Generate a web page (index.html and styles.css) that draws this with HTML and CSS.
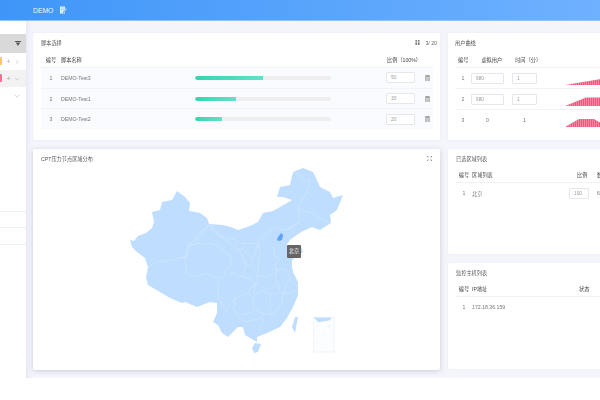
FILE: index.html
```html
<!DOCTYPE html>
<html lang="zh">
<head>
<meta charset="utf-8">
<title>DEMO</title>
<link rel="stylesheet" href="styles.css">
</head>
<body>
<div class="app">
  <header class="topbar">
    <span class="brand">DEMO</span>
    <svg class="edit" viewBox="0 0 8 8"><path d="M1 .5h5v2.400L4 5.600 3.800 7 5.200 6.700 6 6v1.500H1z" fill="#e4f0ff"/><path d="M2 2h3M2 3.500h2.500M2 5h1.200" stroke="#6aa9f5" stroke-width=".5"/><path d="M4.500 6 7.500 2.600" stroke="#e4f0ff" stroke-width=".9"/></svg>
  </header>
  <div class="body">
    <aside class="side">
      <div class="side-head"><svg class="tri" viewBox="0 0 7 6"><path d="M0 0h7v1.200H0zM.8 1.800h5.400L3.500 6z" fill="#555"/></svg></div>
      <div class="side-row"><i class="mark yellow"></i><span class="plus">+</span><svg class="chev" viewBox="0 0 6 6"><path d="M2 .8 4.200 3 2 5.200" fill="none" stroke="#bbb" stroke-width=".6"/></svg></div>
      <div class="side-row active"><i class="mark pink"></i><span class="plus">+</span><svg class="chev" viewBox="0 0 6 6"><path d="M.8 2 3 4.200 5.200 2" fill="none" stroke="#bbb" stroke-width=".6"/></svg></div>
      <div class="side-row"><svg class="chev lone" viewBox="0 0 6 6"><path d="M.8 2 3 4.200 5.200 2" fill="none" stroke="#bbb" stroke-width=".6"/></svg></div>
      <div class="side-lines"><div></div><div></div><div></div></div>
    </aside>
    <main class="main">
      <section class="card scripts">
        <div class="card-title"><span>脚本选择</span>
          <span class="count"><svg class="sorter" viewBox="0 0 6 6"><path d="M.5 0h2v1h-2zM3.500 0h2v1h-2zM.5 1.700h2v1h-2zM3.500 1.700h2v1h-2zM.5 3.400h2v1h-2zM3.500 3.400h2v1h-2zM.5 5h2v1h-2zM3.500 5h2v1h-2z" fill="#555"/></svg>3/ 20</span></div>
        <div class="row-s head"><span class="c">编号</span><span>脚本名称</span><span></span><span></span><span class="nowrap ratio">比例（100%）</span></div>
        <div class="row-s line"><span class="c">1</span><span>DEMO-Test3</span><div class="bar"><div class="fill" style="width:50%"></div></div><span></span><span class="input">50</span><svg class="trash" viewBox="0 0 6 7"><path d="M0 1h6M2 1V.2h2V1M.8 1.500h4.400V7H.8zM2.200 2.500v3.500M3.800 2.500v3.500" fill="none" stroke="#666" stroke-width=".6"/></svg></div>
        <div class="row-s line"><span class="c">2</span><span>DEMO-Test1</span><div class="bar"><div class="fill" style="width:30%"></div></div><span></span><span class="input">30</span><svg class="trash" viewBox="0 0 6 7"><path d="M0 1h6M2 1V.2h2V1M.8 1.500h4.400V7H.8zM2.200 2.500v3.500M3.800 2.500v3.500" fill="none" stroke="#666" stroke-width=".6"/></svg></div>
        <div class="row-s line"><span class="c">3</span><span>DEMO-Test2</span><div class="bar"><div class="fill" style="width:20%"></div></div><span></span><span class="input">20</span><svg class="trash" viewBox="0 0 6 7"><path d="M0 1h6M2 1V.2h2V1M.8 1.500h4.400V7H.8zM2.200 2.500v3.500M3.800 2.500v3.500" fill="none" stroke="#666" stroke-width=".6"/></svg></div>
      </section>

      <section class="card users">
        <div class="card-title"><span>用户曲线</span></div>
        <div class="row-u head"><span class="c">编号</span><span class="c">虚拟用户</span><span class="c">时间（分）</span></div>
        <div class="row-u line"><span class="c">1</span><span class="input wide">680</span><span class="input mid">1</span>
          <svg class="spark" viewBox="0 0 36 10"><path d="M0 10 36 4V10z" fill="url(#st)"/></svg></div>
        <div class="row-u line"><span class="c">2</span><span class="input wide">680</span><span class="input mid">1</span>
          <svg class="spark" viewBox="0 0 36 10"><path d="M0 10 21 1.500H36V10z" fill="url(#st)"/></svg></div>
        <div class="row-u line"><span class="c">3</span><span class="c">0</span><span class="c">1</span>
          <svg class="spark" viewBox="0 0 36 10"><path d="M0 10 14 2H29L36 6V10z" fill="url(#st)"/></svg></div>
        <svg class="defs" width="0" height="0"><defs><pattern id="st" width="2" height="10" patternUnits="userSpaceOnUse"><rect width="2" height="10" fill="#ff9ab2"/><rect width="1.300" height="10" fill="#ff4f7c"/></pattern></defs></svg>
      </section>

      <section class="card map-card">
        <div class="card-title"><span>CPT压力节点区域分布</span>
          <svg class="expand" viewBox="0 0 6 6"><path d="M0 2V0h2M4 0h2v2M6 4v2H4M2 6H0V4M.3.3l1.500 1.500M5.700.3 4.200 1.800M5.700 5.700 4.200 4.200M.3 5.700l1.500-1.500" fill="none" stroke="#666" stroke-width=".6"/></svg></div>
        <div class="map-wrap">
          <svg class="map" viewBox="33 164 407 206">
            <path fill="#bfddff" d="M130 240 134 241 138 236 146 233 152 228 154 222 152 212 160 210 162 202 172 200 177 191 181 194 185 197 190 203 189 211 195 212 200 213 207 218 209 224 223 225 231 227 238 230 250 226 258 222 263 213 273 211 287 203 292 200 283 197 277 197 280 187 290 185 293 172 303 168 313 172 317 180 320 187 330 192 333 198 343 195 337 210 330 215 331 223 320 230 312 227 303 231 298 234 290 240 287 244 287 246 301 246 303 252 292 260 292 267 293 272 298 282 298 295 293 307 287 318 280 327 267 333 257 337 257 342 245 335 243 327 238 327 228 337 222 333 218 325 213 322 217 313 217 303 210 302 197 307 185 302 182 303 170 298 160 292 148 285 146 278 148 267 145 258 137 252 132 247z"/>
            <path fill="#bfddff" d="M295 317 298 317 295 333 292 327zM252 348 255 343 261 344 258 352 254 353z"/>
            <g fill="none" stroke="#dcecff" stroke-width=".45">
              <path d="M148 267 157 262 170 260 185 257 188 247 198 243 197 238 210 225"/>
              <path d="M293 172 300 175 303 180 310 180 307 193 302 200 298 207 300 222 287 230"/>
              <path d="M298 207 306 212 313 213 322 220 330 222"/>
            </g>
            <g transform="translate(180 215) scale(.3333)" fill="none" stroke="#dcecff" stroke-width="1.350">
              <path d="M90 30 70 45 55 55 45 75 25 90 22 125 0 128"/>
              <path d="M25 90 42 88 60 85 72 90 85 85 110 90 122 100 135 110 148 120 155 135 150 160 135 165 135 180 118 190 105 185 90 178 75 175 55 182 40 185 20 175 15 130"/>
              <path d="M90 30 105 55 118 60 130 70 150 85 165 105 180 108 190 130 200 150 195 165 185 185"/>
              <path d="M95 30 110 50 125 65 145 70 165 75 180 85 205 85 230 85 240 75 250 65 262 55 270 45 285 35 305 45 330 40 350 25"/>
              <path d="M165 85 170 100 185 105 195 85"/>
              <path d="M190 105 205 115 215 130 215 150 195 150 190 130M215 130 225 120 232 88"/>
              <path d="M235 85 240 110 235 150 232 180 245 183 262 185 275 178 290 170 285 150 300 130 285 125 280 100 270 90"/>
              <path d="M118 190 113 215 115 245 125 265 140 290 150 270 165 250 185 243 205 235 212 220 225 205 215 195 200 190 185 185 168 178 150 170"/>
              <path d="M165 250 160 285 172 292 185 300 205 295 225 285 245 295 250 300M205 235 220 250 222 280"/>
              <path d="M222 240 235 232 250 228 272 240 270 260 270 280 275 300 245 295"/>
              <path d="M165 290 180 310 195 320 220 315 245 310 250 320 240 345"/>
              <path d="M272 240 287 235 300 230 310 235 305 265 295 280 280 300 275 300M310 235 325 235 340 232 355 225"/>
              <path d="M290 170 285 190 295 210 300 230M285 165 300 162 320 165 330 190 345 205 355 215M330 190 320 205 310 235"/>
              <path d="M232 180 230 205 248 215 265 225 278 218 290 210M225 205 222 240"/>
            </g>
            <path fill="#5ea4f7" d="M278 237 281 233 283 235 282 240 279 241 277 240z"/>
            <path fill="#fbfdff" stroke="#e6f2ff" stroke-width=".7" d="M313.500 317.500h20.500v34.500h-20.500z"/>
            <path fill="#bfddff" d="M314 317.500h18l-3 3-6 1-5 .7z"/>
            <path fill="none" stroke="#e3effc" stroke-width=".7" d="M317 340l1 3M322 336l2-2M330 324l-1 4M318 325l-1 2M325 345l2-2"/>
          </svg>
          <div class="tip">北京</div>
        </div>
      </section>

      <div class="stack">
        <section class="card regions">
          <div class="card-title"><span>已选区域列表</span></div>
          <div class="row-r head hr"><span class="c">编号</span><span>区域列表</span><span class="pad">比例</span><span>数量</span></div>
          <div class="row-r"><span class="c">1</span><span>北京</span><span class="input narrow">100</span><span>680</span></div>
        </section>
        <section class="card hosts">
          <div class="card-title"><span>监控主机列表</span></div>
          <div class="row-h head hr"><span class="c">编号</span><span>IP地址</span><span>状态</span></div>
          <div class="row-h"><span class="c">1</span><span>172.18.36.159</span><span class="status">-</span></div>
        </section>
      </div>
    </main>
  </div>
</div>
</body>
</html>
```

FILE: styles.css
```css
* { box-sizing: border-box; }
html, body { margin: 0; height: 100%; background: #fff; overflow: hidden; }
body { font-family: "Liberation Sans", "Noto Sans CJK SC", sans-serif; font-size: 5.2px; color: #777; }

.app { width: 600px; height: 378px; display: flex; flex-direction: column; overflow: hidden; filter: blur(.3px); }

.topbar { flex: 0 0 21px; display: flex; align-items: center; padding-left: 33px; gap: 6px;
  background: linear-gradient(90deg, #3f96f8, #6fb1ff); border-bottom: 1px solid #8fc2fb; }
.brand { font-size: 6.8px; color: #eef6ff; }
.edit { width: 8px; height: 8px; }

.body { flex: 1; display: flex; min-height: 0; }

.side { flex: 0 0 26px; background: #fff; padding-top: 13px; display: flex; flex-direction: column; }
.side-head { height: 19px; background: #d9d9d9; display: flex; align-items: center; justify-content: flex-end; padding-right: 5px; }
.tri { width: 6px; height: 5px; }
.side-row { height: 17px; display: flex; align-items: center; position: relative; padding-left: 6px; gap: 3px; }
.side-row.active { background: #f2f2f2; }
.mark { position: absolute; left: 0; top: 4px; width: 1.500px; height: 8px; border-radius: 0 1px 1px 0; }
.yellow { background: #ffc85a; }
.pink { background: #ff6f91; }
.plus { width: 5px; font-size: 7px; color: #aaa; line-height: 1; text-align: center; }
.chev { width: 6px; height: 6px; }
.lone { margin-left: 8px; }
.side-lines { margin-top: 91px; }
.side-lines div { height: 16.500px; border-bottom: 1px solid #f0f0f0; }

.main { flex: 1; min-width: 0; background: #f3f5fb; box-shadow: inset 6px 0 6px -6px #dcdfe8; padding: 12px 0 0 7px;
  display: grid; grid-template-columns: 407px 170px; grid-template-rows: 107px 221px; gap: 9px 8px; overflow: hidden; }

.card { background: #fff; border-radius: 2px; padding: 0 7px 0 8px; box-shadow: 0 0 2px #e6e9f2; min-width: 0; overflow: hidden; position: relative; }
.card-title { height: 18px; display: flex; align-items: center; justify-content: space-between; color: #555; padding-top: 1px; }
.count { display: flex; align-items: center; gap: 5px; color: #666; margin-right: -4px; }
.sorter { width: 5px; height: 5px; }

.head { color: #444; }
.c { text-align: center; }
.nowrap { white-space: nowrap; }
.ratio { padding-left: 1px; }

.row-s { display: grid; grid-template-columns: 20px 134px 136px 55px 29px 1fr; align-items: center; height: 20.700px; }
.row-s.head { height: 16px; }
.line { background: #fafbfe; border-top: 1px solid #eff2f7; }
.bar { height: 4px; background: #eeeeee; border-radius: 2px; overflow: hidden; }
.fill { height: 100%; background: linear-gradient(90deg, #35d5b2, #62e0c8); border-radius: 2px 0 0 2px; }
.input { display: block; height: 11px; line-height: 10px; border: 1px solid #e5e7ec; border-radius: 1px; background: #fff; padding-left: 4px; color: #999; font-size: 4.800px; }
.trash { width: 5px; height: 6px; justify-self: end; margin-right: 3px; }

.users { padding: 0 0 0 7px; }
.row-u { display: grid; align-items: center; height: 21px; margin-right: 7px; }
.row-u.head { display: flex; gap: 13px; height: 16px; padding-left: 3px; }
.row-u.line { background: #fff; border-top: 1px solid #eff2f7; grid-template-columns: 16px 33px 8px 25px 28px 36px; }
.row-u.line > :nth-child(2) { grid-column: 2; }
.row-u.line > :nth-child(3) { grid-column: 4; }
.spark { grid-column: 6; width: 36px; height: 10px; align-self: end; margin-bottom: 3px; }
.defs { position: absolute; }

.map-card { box-shadow: 0 1px 5px #c9ccd6; padding: 0 7px 0 8px; }
.expand { width: 5px; height: 5px; margin-right: 1px; }
.map-wrap { position: relative; margin: -3px -7px 0 -8px; }
.map { display: block; width: 407px; height: 206px; }
.tip { position: absolute; left: 254px; top: 81px; width: 14px; height: 13px; line-height: 13px; text-align: center; border-radius: 1px; background: #666; color: #fff; }

.stack { display: flex; flex-direction: column; gap: 9px; min-width: 0; }
.regions { flex: 0 0 105px; }
.hosts { flex: 0 0 106px; }
.hr { border-bottom: 1px solid #eff2f7; }
.row-r, .row-h { display: grid; align-items: center; height: 16px; }
.row-r { grid-template-columns: 16px 97px 28px 1fr; }
.row-h { grid-template-columns: 16px 107px 1fr; }
.row-r:not(.head), .row-h:not(.head) { height: 20px; }
.pad { padding-left: 8px; }
.narrow { width: 20px; }
.status { color: #d6f5ee; padding-left: 5px; }
```
